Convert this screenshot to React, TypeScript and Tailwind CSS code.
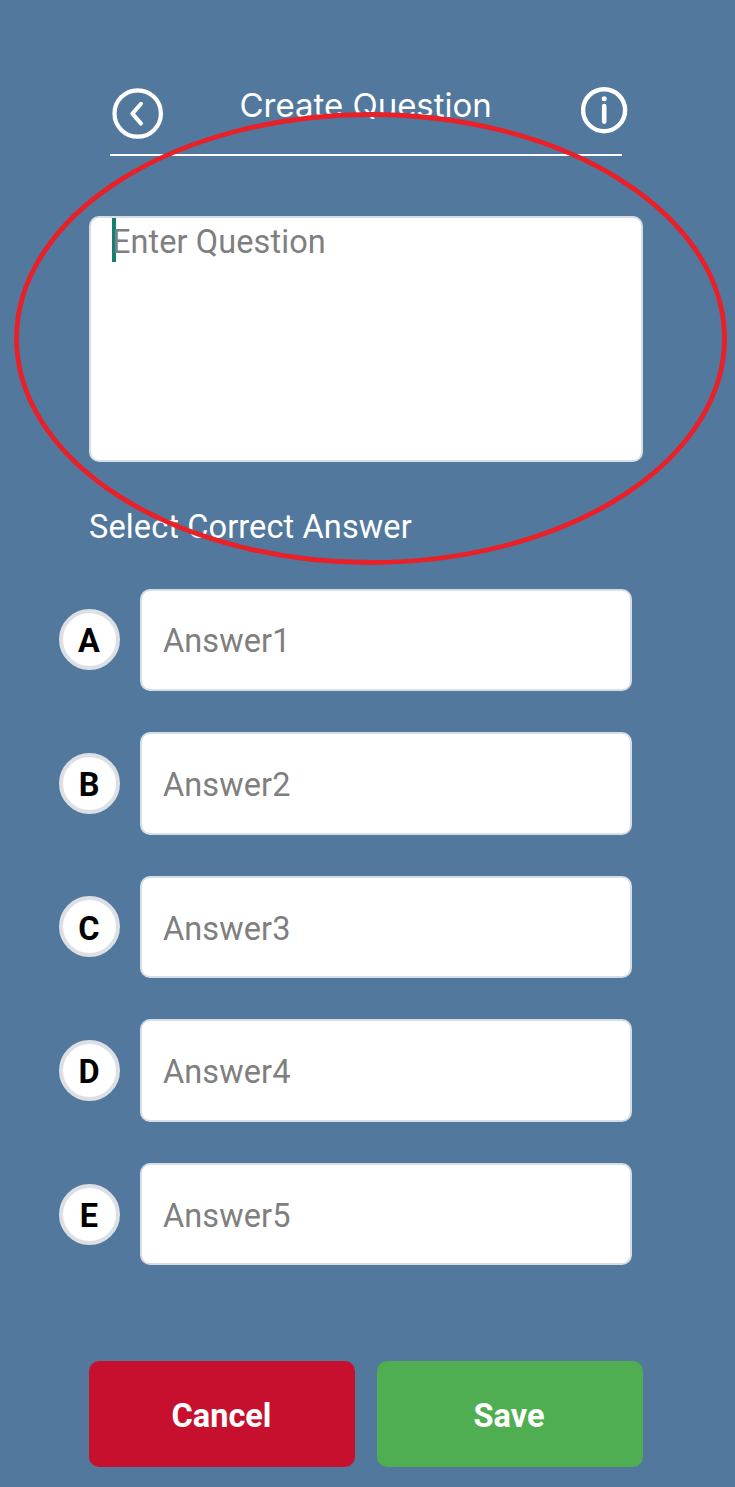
import React from "react";

const answers = [
  { letter: "A", label: "Answer1" },
  { letter: "B", label: "Answer2" },
  { letter: "C", label: "Answer3" },
  { letter: "D", label: "Answer4" },
  { letter: "E", label: "Answer5" },
];

function BackIcon() {
  return (
    <svg className="mt-[1px] h-[51px] w-[51px]" viewBox="0 0 51 51" fill="none" stroke="white" aria-label="Back">
      <circle cx="25.7" cy="25.5" r="23.2" strokeWidth="4.2" />
      <path d="M29 15.8L20.4 25.6L29 35.6" strokeWidth="4" strokeLinecap="round" strokeLinejoin="round" />
    </svg>
  );
}

function InfoIcon() {
  return (
    <svg className="h-[47px] w-[47px]" viewBox="0 0 47 47" fill="none" stroke="white" aria-label="Information">
      <circle cx="23.1" cy="23.2" r="21" strokeWidth="4.4" />
      <circle cx="23.2" cy="11.8" r="2.5" fill="white" stroke="none" />
      <path d="M23.2 19V34.6" strokeWidth="4.6" strokeLinecap="round" />
    </svg>
  );
}

function AnswerRow({ letter, label }: { letter: string; label: string }) {
  return (
    <div className="flex h-[102.6px] items-center">
      <button className="flex h-[61px] w-[61px] items-center justify-center rounded-full border-4 border-[#dcdfe4] bg-white pt-[4px] text-[32.5px] font-bold text-black">
        {letter}
      </button>
      <div className="ml-[20.5px] flex h-full w-[492px] items-center rounded-[10px] border-2 border-[#d5dde5] bg-white pl-[21px] pt-[4px] text-[32.5px] tracking-[0.1px] text-[#7f7f7f]">
        {label}
      </div>
    </div>
  );
}

export default function App() {
  return (
    <main className="relative flex h-[1487px] w-[735px] flex-col overflow-hidden bg-[#52789d] pt-[87px] font-['Roboto',sans-serif]">
      <header className="ml-[110px] flex h-[69px] w-[512px] items-start border-b-2 border-white">
        <div className="ml-[2px]">
          <BackIcon />
        </div>
        <h1 className="ml-[76.5px] w-[260px] whitespace-nowrap font-['Inter',sans-serif] text-[33px] font-normal leading-[37px] tracking-[-0.02px] text-white">
          Create Question
        </h1>
        <div className="ml-auto mr-[-5.5px]">
          <InfoIcon />
        </div>
      </header>

      <div className="ml-[89px] mt-[60px] flex h-[246px] w-[554px] items-start rounded-[10px] border-2 border-[#d5dde5] bg-white pl-[21px] text-[32.5px] leading-[48px] text-[#7f7f7f]">
        <span className="h-[44px] w-[4px] shrink-0 bg-[#13806f]" />
        <span className="ml-[-4px] tracking-[0.08px]">Enter Question</span>
      </div>

      <h2 className="ml-[89px] mt-[45px] h-[40px] text-[32.5px] leading-[40px] tracking-[0.12px] text-white">
        Select Correct Answer
      </h2>

      <div className="ml-[58.5px] mt-[41.5px] flex flex-col gap-[41px]">
        {answers.map((answer) => (
          <AnswerRow key={answer.letter} letter={answer.letter} label={answer.label} />
        ))}
      </div>

      <div className="ml-[89px] mt-[95.5px] flex gap-[22px] text-[32.5px] font-bold text-white">
        <button className="h-[106px] w-[266px] rounded-[10px] bg-[#c6102e] pr-[1px] pt-[5px]">Cancel</button>
        <button className="h-[106px] w-[266px] rounded-[10px] bg-[#4fae51] pr-[2px] pt-[5px]">Save</button>
      </div>

      <svg className="pointer-events-none absolute inset-0 h-[1487px] w-[735px]" viewBox="0 0 735 1487" fill="none">
        <ellipse cx="370.5" cy="338.5" rx="354" ry="224" stroke="#e92027" strokeWidth="4.8" />
      </svg>
    </main>
  );
}
